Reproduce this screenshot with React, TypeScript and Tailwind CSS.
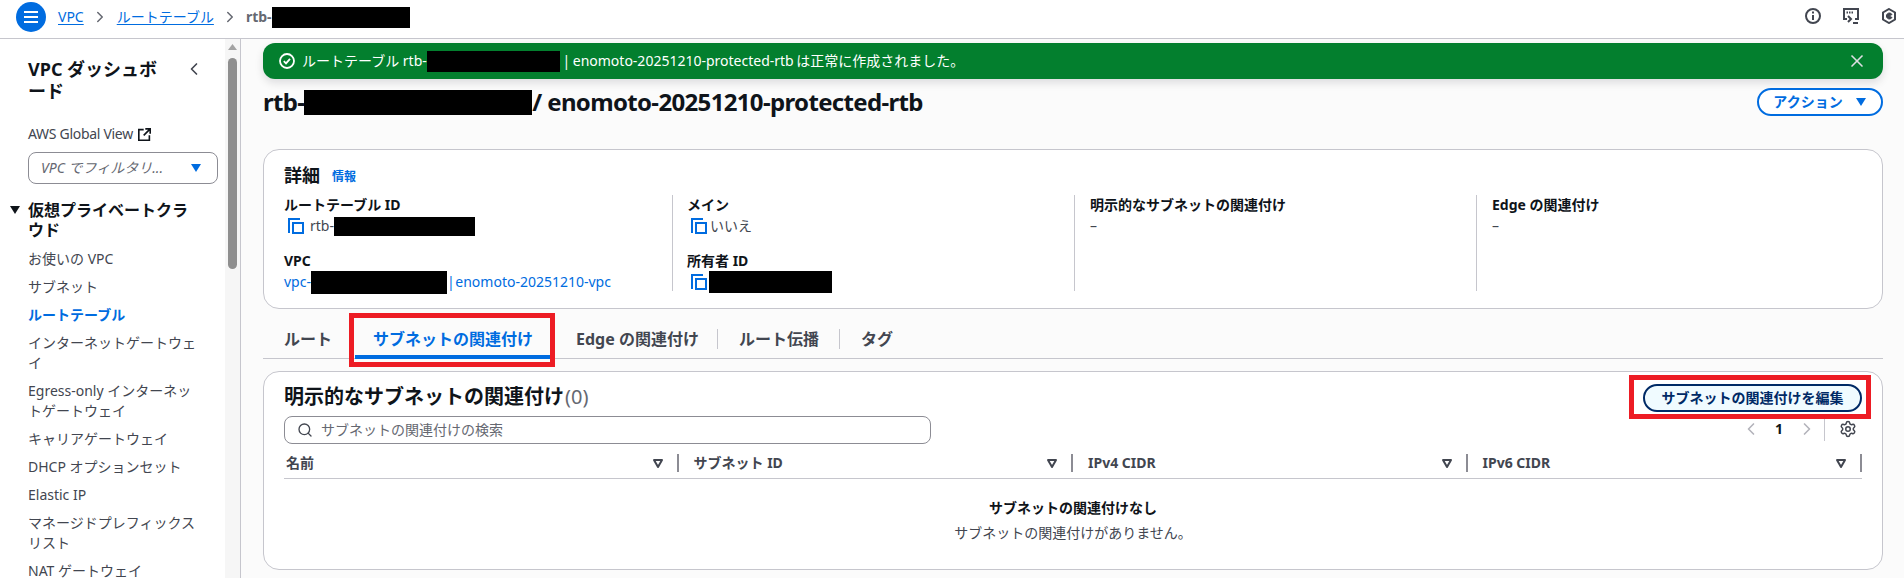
import { ChevronLeft, ChevronRight, Search, Settings, X } from "lucide-react";
import type { ReactNode } from "react";

const Copy = () => (
  <svg width="16" height="16" viewBox="0 0 16 16" fill="none" stroke="#006ce0" strokeWidth="2" className="shrink-0">
    <path d="M1 15V1h11" />
    <rect x="5" y="5" width="10" height="10" />
  </svg>
);

const Sort = () => (
  <svg width="12" height="12" viewBox="0 0 12 12" fill="none" stroke="#424650" strokeWidth="2" strokeLinejoin="round" className="shrink-0">
    <path d="M2 3h8L6 10z" />
  </svg>
);

const Caret = ({ cls = "" }: { cls?: string }) => (
  <svg width="12" height="10" viewBox="0 0 12 10" className={cls}>
    <path d="M1 1h10L6 9z" fill="currentColor" />
  </svg>
);

const Black = ({ w, h }: { w: string; h: string }) => <span className={`inline-block bg-black shrink-0 ${w} ${h}`} />;

const navItems: ReactNode[] = [
  "お使いの VPC",
  "サブネット",
  <span className="text-[#006ce0] font-bold">ルートテーブル</span>,
  <>インターネットゲートウェ<br />イ</>,
  <>Egress-only インターネッ<br />トゲートウェイ</>,
  "キャリアゲートウェイ",
  "DHCP オプションセット",
  "Elastic IP",
  <>マネージドプレフィックス<br />リスト</>,
  "NAT ゲートウェイ",
];

const Field = ({ label, children, cls = "" }: { label: string; children?: ReactNode; cls?: string }) => (
  <div className={cls}>
    <div className="font-bold text-[#0f141a] leading-5">{label}</div>
    {children}
  </div>
);

const HeadCell = ({ label, first }: { label: string; first?: boolean }) => (
  <div className={`flex items-center h-full ${first ? "pl-[2px]" : "pl-[15px]"}`}>
    <span className="font-bold text-[#424650] flex-1 whitespace-nowrap">{label}</span>
    <Sort />
    <span className="ml-[13px] w-[2px] h-[18px] bg-[#8c8c94]" />
  </div>
);

export default function App() {
  return (
    <div
      className="w-[1904px] h-[578px] overflow-hidden flex flex-col bg-white text-sm text-[#0f141a]"
      style={{ fontFamily: '"Noto Sans", "Noto Sans CJK JP", sans-serif' }}
    >
      <header className="h-[39px] shrink-0 border-b border-[#c6c6cd] flex items-center pl-4 pr-[7px]">
        <div className="w-[30px] h-[30px] mb-[4px] rounded-full bg-[#006ce0] flex flex-col items-center justify-center gap-[3px]">
          <span className="w-[14px] h-[2px] bg-white" />
          <span className="w-[14px] h-[2px] bg-white" />
          <span className="w-[14px] h-[2px] bg-white" />
        </div>
        <nav className="flex items-center ml-3 mb-[4px]">
          <a className="text-[#006ce0] underline underline-offset-2">VPC</a>
          <ChevronRight size={18} strokeWidth={2} className="text-[#656871] ml-[7px] mr-[8px]" />
          <a className="text-[#006ce0] underline underline-offset-2">ルートテーブル</a>
          <ChevronRight size={18} strokeWidth={2} className="text-[#656871] mx-[7px]" />
          <span className="font-bold text-[#656871]">rtb-</span>
          <Black w="w-[138px]" h="h-[21px]" />
        </nav>
        <div className="ml-auto flex items-center gap-[22px] mb-[6px] text-[#424650]">
          <svg width="16" height="16" viewBox="0 0 16 16" fill="none" stroke="currentColor" strokeWidth="2">
            <circle cx="8" cy="8" r="7" />
            <path d="M8 7v5M8 3.6v2" />
          </svg>
          <svg width="16" height="16" viewBox="0 0 16 16" fill="none" stroke="currentColor" strokeWidth="2">
            <path d="M4 11H1V1h14v10h-3" />
            <path d="M3.5 4.5h7" strokeDasharray="1.5 1" />
            <path d="M5 8l3 3-3 3M10 15h5" />
          </svg>
          <svg width="16" height="16" viewBox="0 0 16 16" fill="none" stroke="currentColor" strokeWidth="2">
            <path d="M8 1l6 3.5v7L8 15l-6-3.5v-7z" />
            <path d="M11 6.5A3 3 0 1 0 11 9.5L8 8z" fill="currentColor" strokeWidth="1" />
          </svg>
        </div>
      </header>

      <div className="flex flex-1 min-h-0">
        <aside className="w-[241px] shrink-0 border-r border-[#c6c6cd] flex">
          <div className="w-[225px] shrink-0 overflow-hidden pl-[28px] pr-[7px] pt-[19px]">
            <div className="flex justify-between pr-[14px]">
              <h2 className="text-lg font-bold leading-[22px]">VPC ダッシュボ<br />ード</h2>
              <ChevronLeft size={20} strokeWidth={2} className="text-[#424650] mt-[1px]" />
            </div>
            <div className="mt-[22px] flex items-center gap-[5px] text-[#424650] leading-5 tracking-[-0.3px]">
              AWS Global View
              <svg width="13" height="13" viewBox="0 0 16 16" fill="none" stroke="#0f141a" strokeWidth="2">
                <path d="M7 2H1v13h13V9M9 1h6v6M15 1L7 9" />
              </svg>
            </div>
            <div className="mt-[8px] h-8 rounded-lg border border-[#8c8c94] flex items-center pl-3 pr-[15px] bg-white">
              <span className="italic text-[#656871] flex-1 whitespace-nowrap">VPC でフィルタリ...</span>
              <Caret cls="text-[#006ce0]" />
            </div>
            <div className="mt-[16px] relative font-bold text-base leading-5">
              <Caret cls="absolute -left-[19px] top-[5px] text-[#0f141a]" />
              仮想プライベートクラ<br />ウド
            </div>
            <ul className="mt-[9px] flex flex-col gap-2 text-[#424650] leading-5 whitespace-nowrap">
              {navItems.map((it, i) => (
                <li key={i}>{it}</li>
              ))}
            </ul>
          </div>
          <div className="w-[15px] shrink-0 bg-[#f6f6f6] flex flex-col items-center pt-[5px]">
            <svg width="9" height="6" viewBox="0 0 9 6">
              <path d="M4.5 0L9 6H0z" fill="#a3a3a3" />
            </svg>
            <div className="w-[9px] h-[211px] mt-[8px] rounded-full bg-[#8f8f8f]" />
          </div>
        </aside>

        <main className="flex-1 min-w-0 bg-[#fbfbfb] pl-[22px] pr-[21px] pt-[4px]">
          <div className="h-9 rounded-xl bg-[#037f2e] flex items-center pl-[16px] pr-[16px] text-white shadow-[0_4px_8px_rgba(0,7,22,0.12)]">
            <svg width="16" height="16" viewBox="0 0 16 16" fill="none" stroke="white" strokeWidth="1.8">
              <circle cx="8" cy="8" r="7" />
              <path d="M4.8 8.2l2.2 2.2 4-4.6" />
            </svg>
            <span className="ml-[7px] flex items-center whitespace-pre">
              ルートテーブル rtb-
              <Black w="w-[133px]" h="h-[21px]" />
              <span className="[word-spacing:-1px]"> | enomoto-20251210-protected-rtb は正常に作成されました。</span>
            </span>
            <X size={20} strokeWidth={2} className="ml-auto text-[#dedee3]" />
          </div>

          <div className="mt-[9px] h-7 flex items-center justify-between">
            <h1 className="flex items-center text-2xl font-bold whitespace-pre tracking-[-0.66px]">
              rtb-
              <Black w="w-[228px]" h="h-[25px]" />
              <span>/ enomoto-20251210-protected-rtb</span>
            </h1>
            <button className="w-[126px] h-7 rounded-full border-2 border-[#006ce0] text-[#006ce0] flex items-center justify-center gap-[12px] font-bold bg-white">
              アクション
              <Caret />
            </button>
          </div>

          <section className="mt-[33px] h-[160px] rounded-2xl border border-[#c6c6cd] bg-white pl-[20px] pr-[20px] pt-[14px]">
            <div className="flex items-center h-[22px]">
              <h2 className="text-lg font-bold">詳細</h2>
              <a className="ml-[12px] mt-[4px] text-xs font-bold text-[#006ce0]">情報</a>
            </div>
            <div className="flex mt-[9px]">
              <div className="w-[388px] shrink-0">
                <Field label="ルートテーブル ID">
                  <div className="flex items-center h-[20px] mt-[1px] pl-[4px] gap-[6px] text-[#424650]">
                    <Copy />
                    <span className="flex items-center">rtb-<Black w="w-[141px]" h="h-[19px]" /></span>
                  </div>
                </Field>
                <Field label="VPC" cls="mt-[15px]">
                  <div className="flex items-center h-[20px] mt-[1px] text-[#006ce0] whitespace-pre">
                    vpc-<Black w="w-[136px]" h="h-[23px]" /><span className="[word-spacing:-3px]">| enomoto-20251210-vpc</span>
                  </div>
                </Field>
              </div>
              <div className="w-[402px] shrink-0 border-l border-[#c6c6cd] pl-[14px] h-[96px]">
                <Field label="メイン">
                  <div className="flex items-center h-[20px] mt-[1px] pl-[4px] gap-[3px] text-[#424650]">
                    <Copy />
                    いいえ
                  </div>
                </Field>
                <Field label="所有者 ID" cls="mt-[15px]">
                  <div className="flex items-center h-[20px] mt-[1px] pl-[4px] gap-[2px]">
                    <Copy />
                    <Black w="w-[123px]" h="h-[22px]" />
                  </div>
                </Field>
              </div>
              <div className="w-[402px] shrink-0 border-l border-[#c6c6cd] pl-[15px] h-[96px]">
                <Field label="明示的なサブネットの関連付け">
                  <div className="mt-[1px] leading-5 text-[#424650]">–</div>
                </Field>
              </div>
              <div className="flex-1 border-l border-[#c6c6cd] pl-[15px] h-[96px]">
                <Field label="Edge の関連付け">
                  <div className="mt-[1px] leading-5 text-[#424650]">–</div>
                </Field>
              </div>
            </div>
          </section>

          <div className="h-[50px] border-b border-[#c6c6cd] flex items-center text-base font-bold text-[#424650] whitespace-nowrap">
            <span className="pl-[21px] w-[92px] mt-[10px]">ルート</span>
            <div className="relative w-[196px] h-full flex items-center justify-center text-[#006ce0]">
              <span className="mt-[10px]">サブネットの関連付け</span>
              <span className="absolute left-0 right-0 -bottom-[1px] h-1 bg-[#006ce0]" />
              <span className="absolute -left-[6px] -right-[4px] top-[4px] bottom-[-9px] border-[5px] border-[#ed1c24]" />
            </div>
            <span className="pl-[25px] w-[167px] mt-[10px] border-r border-[#c6c6cd] leading-[20px]">Edge の関連付け</span>
            <span className="pl-[21px] w-[122px] mt-[10px] border-r border-[#c6c6cd] leading-[20px]">ルート伝播</span>
            <span className="pl-[21px] mt-[10px]">タグ</span>
          </div>

          <section className="mt-[12px] h-[199px] rounded-2xl border border-[#c6c6cd] bg-white px-[20px]">
            <div className="flex items-start justify-between h-[44px]">
              <h2 className="mt-[12px] text-xl font-bold whitespace-nowrap leading-[26px]">
                明示的なサブネットの関連付け<span className="ml-[1px] font-normal text-[#656871]">(0)</span>
              </h2>
              <div className="relative mt-[12px] w-[219px] h-7 rounded-full border-2 border-[#002a66] bg-[#f0fbff] text-[#002a66] font-bold flex items-center justify-center whitespace-nowrap">
                サブネットの関連付けを編集
                <span className="absolute -left-[16px] -right-[11px] -top-[11px] -bottom-[9px] border-[5px] border-[#ed1c24]" />
              </div>
            </div>
            <div className="flex items-center h-7">
              <div className="w-[647px] h-7 rounded-lg border border-[#8c8c94] flex items-center pl-[12px] gap-[8px] text-[#656871] bg-white">
                <Search size={16} strokeWidth={2} className="text-[#424650]" />
                サブネットの関連付けの検索
              </div>
              <div className="ml-auto flex items-center h-[24px] mt-[-3px]">
                <ChevronLeft size={20} strokeWidth={2} className="text-[#b4b4bb]" />
                <span className="w-[36px] text-center font-bold">1</span>
                <ChevronRight size={20} strokeWidth={2} className="text-[#b4b4bb]" />
                <span className="ml-[7px] w-px h-[24px] bg-[#c6c6cd]" />
                <Settings size={18} strokeWidth={2} className="ml-[14px] mr-[5px] text-[#424650]" />
              </div>
            </div>
            <div className="grid grid-cols-4 h-[32px] mt-[3px] border-b border-[#c6c6cd]">
              <HeadCell label="名前" first />
              <HeadCell label="サブネット ID" />
              <HeadCell label="IPv4 CIDR" />
              <HeadCell label="IPv6 CIDR" />
            </div>
            <div className="text-center pt-[19px] leading-5">
              <div className="font-bold">サブネットの関連付けなし</div>
              <div className="mt-[5px] text-[#424650]">サブネットの関連付けがありません。</div>
            </div>
          </section>
        </main>
      </div>
    </div>
  );
}
